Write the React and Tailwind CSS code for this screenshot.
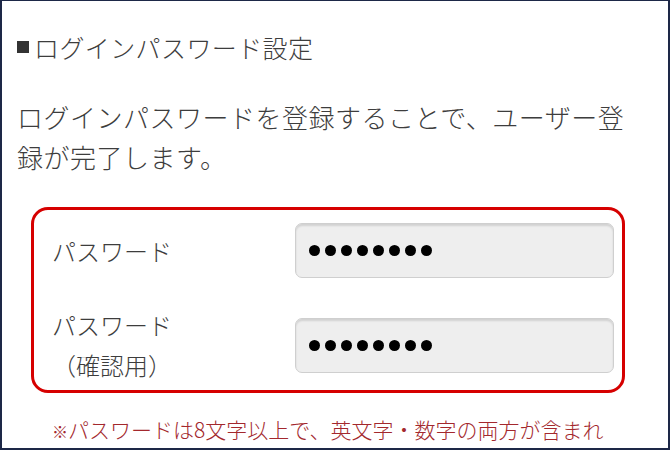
export default function App() {
  const dots = Array.from({ length: 8 });

  const Masked = () => (
    <div className="flex h-[55px] w-[319px] items-center gap-[5px] rounded-[7px] border border-[#cfcfcf] bg-[#eeeeee] pl-[13px] shadow-[inset_0_2px_2px_rgba(0,0,0,0.12)]">
      {dots.map((_, i) => (
        <span key={i} className="block h-[11px] w-[11px] rounded-full bg-black" />
      ))}
    </div>
  );

  return (
    <div
      className="h-[450px] w-[670px] overflow-hidden border-x-2 border-t border-b-2 border-[#1d2847] bg-white font-light text-[#3d3d3d]"
      style={{ fontFamily: '"Noto Sans CJK JP", "Noto Sans", sans-serif' }}
    >
      {/* heading */}
      <h1 className="mt-[26px] flex items-center pl-[15px] text-[25px] font-light leading-[40px] tracking-[0.4px]">
        <span className="mr-[5px] block h-[12px] w-[12px] bg-[#333]" />
        ログインパスワード設定
      </h1>

      {/* description */}
      <p className="mt-[30px] w-[630px] pl-[15px] text-[26px] leading-[40px] tracking-[0.5px]">
        ログインパスワードを登録することで、ユーザー登録が完了します。
      </p>

      {/* password box */}
      <div className="ml-[29px] mt-[30px] w-[594px] rounded-[17px] border-[3px] border-[#d60000] pb-[5px] pl-[18px] pr-[8px] pt-[13px]">
        <div className="flex items-center justify-between">
          <span className="text-[24px] leading-[40px]">パスワード</span>
          <Masked />
        </div>
        <div className="mt-[27px] flex items-center justify-between">
          <span className="text-[24px] leading-[40px]">
            パスワード
            <br />
            （確認用）
          </span>
          <Masked />
        </div>
      </div>

      {/* note */}
      <p className="mt-[21px] whitespace-nowrap pl-[50px] text-[21px] leading-[30px] text-[#a3282d]">
        <span className="text-[16px]">※</span>パスワードは8文字以上で、英文字・数字の両方が含まれ
      </p>
    </div>
  );
}
